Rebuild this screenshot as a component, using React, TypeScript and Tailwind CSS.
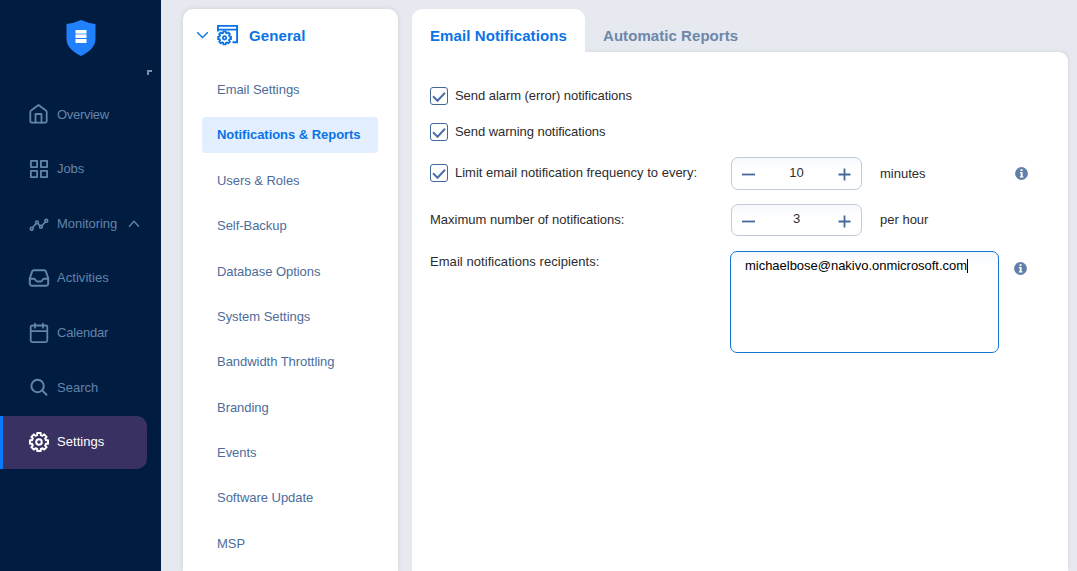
import type { ReactNode } from 'react';
import clsx from 'clsx';

// Eight flat teeth around (10.5, 10.5)
const gearPath =
    Array.from({ length: 8 }, (_, i) =>
        [
            [-15, 7.1],
            [-11, 9.2],
            [11, 9.2],
            [15, 7.1],
        ]
            .map(([deg, r], j) => {
                const a = ((i * 45 + deg) * Math.PI) / 180;
                const x = (10.5 + r * Math.sin(a)).toFixed(2);
                const y = (10.5 - r * Math.cos(a)).toFixed(2);
                return `${i === 0 && j === 0 ? 'M' : 'L'}${x} ${y}`;
            })
            .join('')
    ).join('') + 'z';

function Icon({ children, width = 1.8 }: { children: ReactNode; width?: number }) {
    return (
        <svg
            className="shrink-0"
            width="22"
            height="22"
            viewBox="0 0 22 22"
            fill="none"
            stroke="currentColor"
            strokeWidth={width}
            strokeLinecap="round"
            strokeLinejoin="round"
        >
            {children}
        </svg>
    );
}

const navItems = [
    {
        label: 'Overview',
        text: 'tracking-[-0.3px]',
        icon: (
            <Icon>
                <path d="M2.300 9v9.200a1.500 1.500 0 0 0 1.500 1.500h13.400a1.500 1.500 0 0 0 1.500-1.500V9a2 2 0 0 0-.8-1.500L10.500 2 3.100 7.500A2 2 0 0 0 2.300 9z" />
                <path d="M7.500 19.500v-8.500h6v8.500" />
            </Icon>
        ),
    },
    {
        label: 'Jobs',
        text: 'tracking-[-0.1px]',
        icon: (
            <Icon>
                <path d="M2.900 2.900h6.200v6.200H2.900zM12.900 2.900h6.200v6.200h-6.200zM2.900 12.900h6.200v6.200H2.900zM12.900 12.900h6.200v6.200h-6.200z" />
            </Icon>
        ),
    },
    {
        label: 'Monitoring',
        text: 'tracking-[-0.05px]',
        icon: (
            <Icon width={1.6}>
                <circle cx="3.700" cy="16.700" r="1.400" />
                <circle cx="9" cy="10.400" r="1.400" />
                <circle cx="12.900" cy="14.800" r="1.400" />
                <circle cx="18.300" cy="8.800" r="1.400" />
                <path d="M4.600 15.500l3.500-3.900M10 11.500l2 2.200M13.800 13.700l3.600-3.800" />
            </Icon>
        ),
    },
    {
        label: 'Activities',
        text: 'tracking-[0.05px]',
        icon: (
            <Icon width={2}>
                <path d="M5.600 3.200h10.800q1 0 1.400 1l2.400 7v5.400a2.200 2.200 0 0 1-2.200 2.200H4a2.200 2.200 0 0 1-2.200-2.200v-5.400l2.400-7q.4-1 1.400-1z" />
                <path d="M2 11.700h4.200c1.200 0 1.300 2.700 3 2.700h3.600c1.700 0 1.800-2.700 3-2.700H20" />
            </Icon>
        ),
    },
    {
        label: 'Calendar',
        text: 'tracking-[-0.2px]',
        icon: (
            <Icon>
                <rect x="2.700" y="3.500" width="16.600" height="16.600" rx="1.500" />
                <path d="M2.700 9.200h16.600M7 1.700v4M15 1.700v4" />
            </Icon>
        ),
    },
    {
        label: 'Search',
        text: '',
        icon: (
            <Icon width={2}>
                <circle cx="9.600" cy="10" r="6.200" />
                <path d="M14.100 14.400l4.400 4.400" />
            </Icon>
        ),
    },
    {
        label: 'Settings',
        text: 'tracking-[0.05px]',
        icon: (
            <Icon width={2}>
                <g transform="translate(.5 .5)">
                    <path d={gearPath} />
                    <circle cx="10.500" cy="10.500" r="2.800" />
                </g>
            </Icon>
        ),
    },
];

const generalItems = [
    'Email Settings',
    'Notifications & Reports',
    'Users & Roles',
    'Self-Backup',
    'Database Options',
    'System Settings',
    'Bandwidth Throttling',
    'Branding',
    'Events',
    'Software Update',
    'MSP',
];

function Sidebar() {
    return (
        <aside className="w-[161px] shrink-0 bg-[#001c41] flex flex-col">
            <div className="flex justify-center pt-5">
                <svg width="30" height="36" viewBox="0 0 30 36">
                    <path d="M15 0Q21.500 3 29.500 4V19Q29.500 29 15 36 .5 29 .5 19V4Q8.500 3 15 0z" fill="#2080fd" />
                    <path d="M9.500 10h11v3h-11zM9.500 15h11v3h-11zM9.500 19h11v4h-11z" fill="#fff" />
                    <path d="M9.500 13h11v2h-11z" fill="#a9cdff" />
                </svg>
            </div>
            <div className="flex justify-end pt-[14px] pr-[9px] h-[31px]">
                <div className="size-[5px] border-t-2 border-l-2 border-[#7890ab]" />
            </div>
            <nav className="flex flex-col">
                {navItems.map(({ label, icon, text }) => {
                    const active = label === 'Settings';
                    return (
                        <a
                            key={label}
                            href="#"
                            className={clsx(
                                'flex items-center w-[147px] text-[13px]',
                                active
                                    ? 'h-[53px] mt-[1.4px] bg-[#3a3163] text-white rounded-r-[10px] border-l-[3px] border-[#0a78ff] pl-[25px]'
                                    : 'h-[54.6px] text-[#6385aa] pl-7'
                            )}
                        >
                            {icon}
                            <span className={clsx('ml-[7px]', text, active && 'pb-[2px]')}>{label}</span>
                            {label === 'Monitoring' && (
                                <svg className="ml-[11px] mt-px" width="12" height="8" viewBox="0 0 12 8" fill="none" stroke="currentColor" strokeWidth="1.3">
                                    <path d="M1 6.700l5-5.400 5 5.400" />
                                </svg>
                            )}
                        </a>
                    );
                })}
            </nav>
        </aside>
    );
}

function GeneralMenu() {
    return (
        <section className="w-[215px] shrink-0 ml-[22px] mt-[9px] bg-white rounded-t-[10px] shadow-[0_0_5px_rgba(60,70,100,0.14)]">
            <div className="flex items-center h-[52px] pl-[13px] text-[#0a73e6]">
                <svg width="13" height="8" viewBox="0 0 13 8" fill="none" stroke="currentColor" strokeWidth="1.300">
                    <path d="M1.200 1.200l5.300 5.300 5.300-5.300" />
                </svg>
                <svg className="ml-2" width="22" height="22" viewBox="0 0 22 22" fill="none" stroke="currentColor" strokeWidth="1.900">
                    <path d="M.9 7.500V1.900h19.200v16.300h-4.600M.9 5.600h19.200" />
                    <g transform="translate(0 6.300) scale(.72)" strokeWidth="2.400" strokeLinejoin="round">
                        <path d={gearPath} />
                        <circle cx="10.500" cy="10.500" r="2.300" />
                    </g>
                </svg>
                <h2 className="ml-[10px] pt-[2px] text-[15px] font-bold tracking-[0.1px]">General</h2>
            </div>
            <ul className="pt-[6px] text-[13px] text-[#4c6d9c]">
                {generalItems.map((item) => (
                    <li key={item} className="flex items-center h-[45.4px] pl-[19px] pr-5">
                        <a
                            href="#"
                            className={clsx(
                                'flex items-center h-9 w-full pl-[15px] rounded-[3px] tracking-[-0.04px]',
                                item === 'Notifications & Reports' && 'bg-[#e3effe] text-[#0a73e6] font-bold'
                            )}
                        >
                            {item}
                        </a>
                    </li>
                ))}
            </ul>
        </section>
    );
}

function Check() {
    return (
        <span className="flex items-center justify-center size-[18px] mr-[7px] border border-[#44689c] rounded-[3px]">
            <svg className="mt-[2px]" width="14" height="12" viewBox="0 0 14 12" fill="none" stroke="#4d71a5" strokeWidth="2">
                <path d="M1 5.300l4.500 4.500L13 1.700" />
            </svg>
        </span>
    );
}

function Stepper({ value }: { value: number }) {
    return (
        <div className="flex items-center justify-between w-[131px] h-full px-[10px] border border-[#c0cadb] rounded-[7px] bg-linear-to-b from-[#f6f8fc] to-white to-40%">
            <svg className="mt-[2px]" width="13" height="13" stroke="#44689c" strokeWidth="1.800">
                <path d="M0 6.500h13" />
            </svg>
            <span className="pb-[2px]">{value}</span>
            <svg className="mt-[2px]" width="13" height="13" stroke="#44689c" strokeWidth="1.800">
                <path d="M.5 6.500h12M6.500.5v12" />
            </svg>
        </div>
    );
}

function Info() {
    return (
        <svg width="13" height="13" viewBox="0 0 13 13">
            <circle cx="6.500" cy="6.500" r="6.400" fill="#607fa9" />
            <path d="M5.500 2.200h2.100v1.800H5.500zM4.900 5.100h2.700v4.200h.8v1.100H4.900V9.300h.8V6.200h-.8z" fill="#fff" />
        </svg>
    );
}

function Notifications() {
    return (
        <main className="w-[656px] shrink-0 ml-[14px] mt-[9px] flex flex-col">
            <div className="relative z-10 flex h-[43px] text-[15px] font-bold">
                <div className="flex items-center w-[173px] h-[45px] pl-[18px] pt-[10px] bg-white rounded-t-[10px] text-[#0a73e6] tracking-[0.1px]">
                    Email Notifications
                </div>
                <div className="flex items-center h-[45px] pl-[18px] pt-[10px] text-[#6d87a9] tracking-[0.06px]">Automatic Reports</div>
            </div>
            <div className="flex-1 bg-white rounded-tr-[9px] pl-[18px] pt-[35px] shadow-[2px_-2px_4px_-2px_rgba(60,70,100,0.12)] text-[13px] text-[#2c2c2e]">
                <label className="flex items-center h-[18px] tracking-[-0.05px]">
                    <Check />
                    Send alarm (error) notifications
                </label>
                <label className="flex items-center h-[18px] mt-[18px] tracking-[-0.05px]">
                    <Check />
                    Send warning notifications
                </label>
                <div className="flex h-[33px] mt-4">
                    <label className="flex items-center w-[301px] h-8">
                        <Check />
                        Limit email notification frequency to every:
                    </label>
                    <Stepper value={10} />
                    <span className="flex items-center ml-[18px] w-[135px]">minutes</span>
                    <span className="flex items-center">
                        <Info />
                    </span>
                </div>
                <div className="flex items-center h-8 mt-[14px]">
                    <span className="w-[301px]">Maximum number of notifications:</span>
                    <Stepper value={3} />
                    <span className="ml-[18px]">per hour</span>
                </div>
                <div className="flex mt-[15px]">
                    <span className="w-[300px] pt-px tracking-[0.06px]">Email notifications recipients:</span>
                    <div className="flex w-[269px] h-[102px] pt-1 pl-[14px] border border-[#1477d4] rounded-[7px] bg-linear-to-b from-[#f6f8fc] to-white to-15% text-black">
                        <span className="tracking-[-0.02px]">michaelbose@nakivo.onmicrosoft.com</span>
                        <span className="w-px h-[14px] mt-[3px] bg-black" />
                    </div>
                    <div className="ml-[15px] mt-[11px]">
                        <Info />
                    </div>
                </div>
            </div>
        </main>
    );
}

export default function App() {
    return (
        <div className="flex w-[1077px] h-[571px] overflow-hidden bg-[#e6e9ef] font-['Liberation_Sans',Arial,sans-serif]">
            <Sidebar />
            <GeneralMenu />
            <Notifications />
        </div>
    );
}
